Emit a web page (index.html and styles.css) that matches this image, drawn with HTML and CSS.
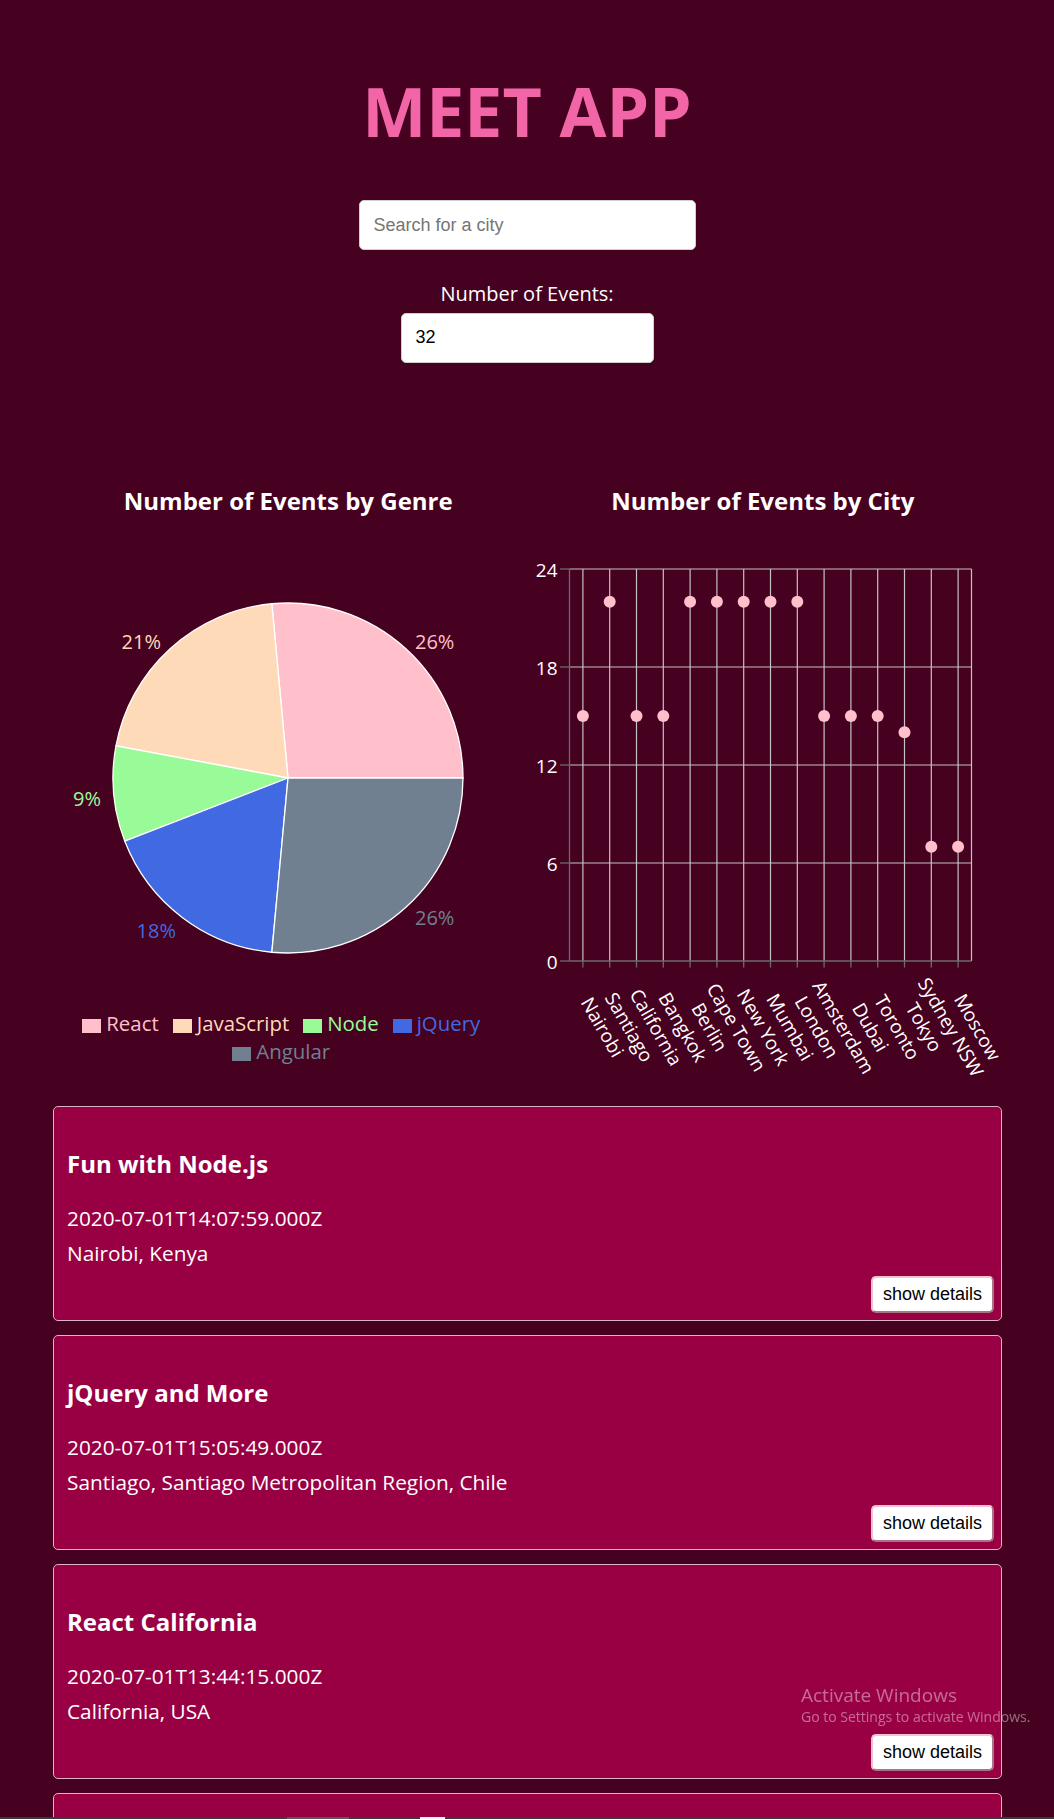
FILE: index.html
```html
<!DOCTYPE html>
<html lang="en">
<head>
<meta charset="utf-8">
<title>Meet App</title>
<link rel="stylesheet" href="styles.css">
</head>
<body>
<div class="app">
  <h1 class="app-title">MEET APP</h1>
  <div class="city-search">
    <input type="text" class="city" placeholder="Search for a city">
  </div>
  <div class="number-of-events">
    <label class="noe-label" for="noe">Number of Events:</label>
    <input id="noe" type="number" class="noe-input" value="32">
  </div>

  <div class="charts">
    <div class="chart">
      <h3 class="chart-title">Number of Events by Genre</h3>
      <svg class="chart-svg" width="474.5" height="493" viewBox="0 0 474.5 493">
        <g stroke="#fff" stroke-width="1.3">
          <path fill="#ffc0cb" d="M237 262 L412 262 A175 175 0 0 0 220.85 87.75 Z"/>
          <path fill="#ffdab9" d="M237 262 L220.85 87.75 A175 175 0 0 0 64.98 229.84 Z"/>
          <path fill="#98fb98" d="M237 262 L64.98 229.84 A175 175 0 0 0 73.82 325.22 Z"/>
          <path fill="#4169e1" d="M237 262 L73.82 325.22 A175 175 0 0 0 220.85 436.25 Z"/>
          <path fill="#708090" d="M237 262 L220.85 436.25 A175 175 0 0 0 412 262 Z"/>
        </g>
        <g class="pie-label">
          <text x="364" y="133" fill="#ffc0cb">26%</text>
          <text x="110" y="133" text-anchor="end" fill="#ffdab9">21%</text>
          <text x="50" y="290" text-anchor="end" fill="#98fb98">9%</text>
          <text x="125" y="422" text-anchor="end" fill="#4169e1">18%</text>
          <text x="364" y="409" fill="#708090">26%</text>
        </g>
      </svg>
      <ul class="legend">
        <li class="legend-item c-react"><span class="legend-icon"></span>React</li>
        <li class="legend-item c-js"><span class="legend-icon"></span>JavaScript</li>
        <li class="legend-item c-node"><span class="legend-icon"></span>Node</li>
        <li class="legend-item c-jquery"><span class="legend-icon"></span>jQuery</li>
        <li class="legend-item c-angular"><span class="legend-icon"></span>Angular</li>
      </ul>
    </div>

    <div class="chart">
      <h3 class="chart-title">Number of Events by City</h3>
      <svg class="chart-svg" width="474.5" height="549" viewBox="0 0 474.5 549">
        <g class="grid" stroke="#c4c4c4" stroke-width="1.2">
          <line x1="43.5" y1="53" x2="445.5" y2="53"/>
          <line x1="43.5" y1="151" x2="445.5" y2="151"/>
          <line x1="43.5" y1="249" x2="445.5" y2="249"/>
          <line x1="43.5" y1="347" x2="445.5" y2="347"/>
          <line x1="56.9" y1="53" x2="56.9" y2="445"/>
          <line x1="83.7" y1="53" x2="83.7" y2="445"/>
          <line x1="110.5" y1="53" x2="110.5" y2="445"/>
          <line x1="137.3" y1="53" x2="137.3" y2="445"/>
          <line x1="164.1" y1="53" x2="164.1" y2="445"/>
          <line x1="190.9" y1="53" x2="190.9" y2="445"/>
          <line x1="217.7" y1="53" x2="217.7" y2="445"/>
          <line x1="244.5" y1="53" x2="244.5" y2="445"/>
          <line x1="271.3" y1="53" x2="271.3" y2="445"/>
          <line x1="298.1" y1="53" x2="298.1" y2="445"/>
          <line x1="324.9" y1="53" x2="324.9" y2="445"/>
          <line x1="351.7" y1="53" x2="351.7" y2="445"/>
          <line x1="378.5" y1="53" x2="378.5" y2="445"/>
          <line x1="405.3" y1="53" x2="405.3" y2="445"/>
          <line x1="432.1" y1="53" x2="432.1" y2="445"/>
          <line x1="445.5" y1="53" x2="445.5" y2="445"/>
        </g>
        <g class="axis" stroke="#6b6b6b" stroke-width="1.3">
          <line x1="43.5" y1="53" x2="43.5" y2="445"/>
          <line x1="43.5" y1="445" x2="445.5" y2="445"/>
          <line x1="34" y1="53" x2="43.5" y2="53"/>
          <line x1="34" y1="151" x2="43.5" y2="151"/>
          <line x1="34" y1="249" x2="43.5" y2="249"/>
          <line x1="34" y1="347" x2="43.5" y2="347"/>
          <line x1="34" y1="445" x2="43.5" y2="445"/>
          <line x1="56.9" y1="445" x2="56.9" y2="451.5"/>
          <line x1="83.7" y1="445" x2="83.7" y2="451.5"/>
          <line x1="110.5" y1="445" x2="110.5" y2="451.5"/>
          <line x1="137.3" y1="445" x2="137.3" y2="451.5"/>
          <line x1="164.1" y1="445" x2="164.1" y2="451.5"/>
          <line x1="190.9" y1="445" x2="190.9" y2="451.5"/>
          <line x1="217.7" y1="445" x2="217.7" y2="451.5"/>
          <line x1="244.5" y1="445" x2="244.5" y2="451.5"/>
          <line x1="271.3" y1="445" x2="271.3" y2="451.5"/>
          <line x1="298.1" y1="445" x2="298.1" y2="451.5"/>
          <line x1="324.9" y1="445" x2="324.9" y2="451.5"/>
          <line x1="351.7" y1="445" x2="351.7" y2="451.5"/>
          <line x1="378.5" y1="445" x2="378.5" y2="451.5"/>
          <line x1="405.3" y1="445" x2="405.3" y2="451.5"/>
          <line x1="432.1" y1="445" x2="432.1" y2="451.5"/>
        </g>
        <g class="tick-label y-ticks">
          <text x="31.5" y="61" text-anchor="end">24</text>
          <text x="31.5" y="159" text-anchor="end">18</text>
          <text x="31.5" y="257" text-anchor="end">12</text>
          <text x="31.5" y="355" text-anchor="end">6</text>
          <text x="31.5" y="453" text-anchor="end">0</text>
        </g>
        <g fill="#ffc0cb">
          <circle cx="56.9" cy="200" r="6"/>
          <circle cx="83.7" cy="85.67" r="6"/>
          <circle cx="110.5" cy="200" r="6"/>
          <circle cx="137.3" cy="200" r="6"/>
          <circle cx="164.1" cy="85.67" r="6"/>
          <circle cx="190.9" cy="85.67" r="6"/>
          <circle cx="217.7" cy="85.67" r="6"/>
          <circle cx="244.5" cy="85.67" r="6"/>
          <circle cx="271.3" cy="85.67" r="6"/>
          <circle cx="298.1" cy="200" r="6"/>
          <circle cx="324.9" cy="200" r="6"/>
          <circle cx="351.7" cy="200" r="6"/>
          <circle cx="378.5" cy="216.33" r="6"/>
          <circle cx="405.3" cy="330.67" r="6"/>
          <circle cx="432.1" cy="330.67" r="6"/>
        </g>
        <g class="tick-label x-ticks" text-anchor="middle">
          <text transform="translate(70.5 514.6) rotate(60)">Nairobi</text>
          <text transform="translate(97.3 514.6) rotate(60)">Santiago</text>
          <text transform="translate(124.1 514.6) rotate(60)">California</text>
          <text transform="translate(150.9 514.6) rotate(60)">Bangkok</text>
          <text transform="translate(177.7 514.6) rotate(60)">Berlin</text>
          <text transform="translate(204.5 514.6) rotate(60)">Cape Town</text>
          <text transform="translate(231.3 514.6) rotate(60)">New York</text>
          <text transform="translate(258.1 514.6) rotate(60)">Mumbai</text>
          <text transform="translate(284.9 514.6) rotate(60)">London</text>
          <text transform="translate(311.7 514.6) rotate(60)">Amsterdam</text>
          <text transform="translate(338.5 514.6) rotate(60)">Dubai</text>
          <text transform="translate(365.3 514.6) rotate(60)">Toronto</text>
          <text transform="translate(392.1 514.6) rotate(60)">Tokyo</text>
          <text transform="translate(418.9 514.6) rotate(60)">Sydney NSW</text>
          <text transform="translate(445.7 514.6) rotate(60)">Moscow</text>
        </g>
      </svg>
    </div>
  </div>

  <ul class="events">
    <li class="event">
      <h3 class="event-title">Fun with Node.js</h3>
      <p class="event-date">2020-07-01T14:07:59.000Z</p>
      <p class="event-location">Nairobi, Kenya</p>
      <button class="details-btn">show details</button>
    </li>
    <li class="event">
      <h3 class="event-title">jQuery and More</h3>
      <p class="event-date">2020-07-01T15:05:49.000Z</p>
      <p class="event-location">Santiago, Santiago Metropolitan Region, Chile</p>
      <button class="details-btn">show details</button>
    </li>
    <li class="event">
      <h3 class="event-title">React California</h3>
      <p class="event-date">2020-07-01T13:44:15.000Z</p>
      <p class="event-location">California, USA</p>
      <button class="details-btn">show details</button>
    </li>
    <li class="event">
      <h3 class="event-title">Learn JavaScript</h3>
      <p class="event-date">2020-05-19T16:00:00.000Z</p>
      <p class="event-location">Bangkok, Thailand</p>
      <button class="details-btn">show details</button>
    </li>
  </ul>
</div>

<div class="watermark">
  <div class="wm-title">Activate Windows</div>
  <div class="wm-sub">Go to Settings to activate Windows.</div>
</div>
<div class="taskbar-edge"><span class="tb-a"></span><span class="tb-b"></span></div>
</body>
</html>
```

FILE: styles.css
```css
* { box-sizing: border-box; }

html, body {
  margin: 0;
  padding: 0;
}

body {
  background: #460020;
  color: #fff;
  font-family: "Open Sans", "Noto Sans", sans-serif;
  font-size: 20px;
}

.app {
  padding-top: 77px;
  text-align: center;
}

.app-title {
  margin: 0;
  font-size: 68px;
  line-height: 68px;
  font-weight: 700;
  color: #f266a7;
}

.city-search {
  margin-top: 55px;
  display: flex;
  justify-content: center;
}

.city,
.noe-input {
  height: 50px;
  padding: 0 14px;
  border: 1px solid #cfcfcf;
  border-radius: 5px;
  background: #fff;
  color: #000;
  font-family: "Liberation Sans", Arial, sans-serif;
  font-size: 18px;
  outline: none;
}

.city { width: 337px; }
.city::placeholder { color: #757575; }

.number-of-events {
  margin-top: 29.6px;
  display: flex;
  flex-direction: column;
  align-items: center;
}

.noe-label {
  font-size: 20px;
  line-height: 27px;
}

.noe-input {
  margin-top: 6.4px;
  width: 253px;
}

.charts {
  margin-top: 123.4px;
  display: grid;
  grid-template-columns: 474.5px 474.5px;
  padding: 0 54px 0 51px;
}

.chart-title {
  margin: 0;
  font-size: 24px;
  line-height: 30px;
  font-weight: 700;
}

.chart-svg {
  display: block;
  overflow: visible;
}

.pie-label text {
  font-family: "Open Sans", "Noto Sans", sans-serif;
  font-size: 20px;
}

.tick-label text {
  font-family: "Open Sans", "Noto Sans", sans-serif;
  font-size: 19px;
  fill: #fff;
}

.legend {
  list-style: none;
  margin: 0;
  padding: 0;
  display: flex;
  flex-wrap: wrap;
  justify-content: center;
  font-size: 20.4px;
  line-height: 28px;
}

.legend-item {
  margin-right: 14px;
  white-space: nowrap;
}

.legend-icon {
  display: inline-block;
  width: 19px;
  height: 14.5px;
  margin-right: 5px;
  vertical-align: middle;
  background: currentColor;
}

.c-react { color: #ffc0cb; }
.c-js { color: #ffdab9; }
.c-node { color: #98fb98; }
.c-jquery { color: #4169e1; }
.c-angular { color: #708090; }

.events {
  list-style: none;
  margin: 40.6px 52px 0 53px;
  padding: 0;
  text-align: left;
}

.event {
  height: 215px;
  margin-bottom: 14px;
  padding: 41px 7px 0 13px;
  display: flex;
  flex-direction: column;
  background: #990044;
  border: 1px solid #d8b4c4;
  border-radius: 5px;
}

.event-title {
  margin: 0;
  font-size: 24px;
  line-height: 32px;
  font-weight: 700;
}

.event-date {
  margin: 25.2px 0 0;
  font-size: 20.8px;
  line-height: 27px;
}

.event-location {
  margin: 8px 0 0;
  font-size: 20.8px;
  line-height: 27px;
}

.details-btn {
  align-self: flex-end;
  margin-top: 8.8px;
  width: 123px;
  height: 37px;
  padding: 0;
  background: #fff;
  color: #000;
  font-family: "Liberation Sans", Arial, sans-serif;
  font-size: 18px;
  border: 2px solid;
  border-color: #f7c1cf #a77685 #a77685 #f7c1cf;
  border-radius: 5px;
}

.watermark {
  position: fixed;
  left: 801px;
  top: 1683px;
  color: rgba(255, 255, 255, 0.42);
  font-family: "Open Sans", "Noto Sans", sans-serif;
  pointer-events: none;
}

.wm-title {
  font-size: 19px;
  line-height: 24px;
}

.wm-sub {
  font-size: 14px;
  line-height: 20px;
}

.taskbar-edge {
  position: fixed;
  left: 0;
  right: 0;
  bottom: 0;
  height: 2px;
  background: #3a3a3a;
}

.tb-a {
  position: absolute;
  left: 287px;
  width: 62px;
  top: 0;
  bottom: 0;
  background: #5a5a5a;
}

.tb-b {
  position: absolute;
  left: 420px;
  width: 25px;
  top: 0;
  bottom: 0;
  background: #f0f0f0;
}
```
